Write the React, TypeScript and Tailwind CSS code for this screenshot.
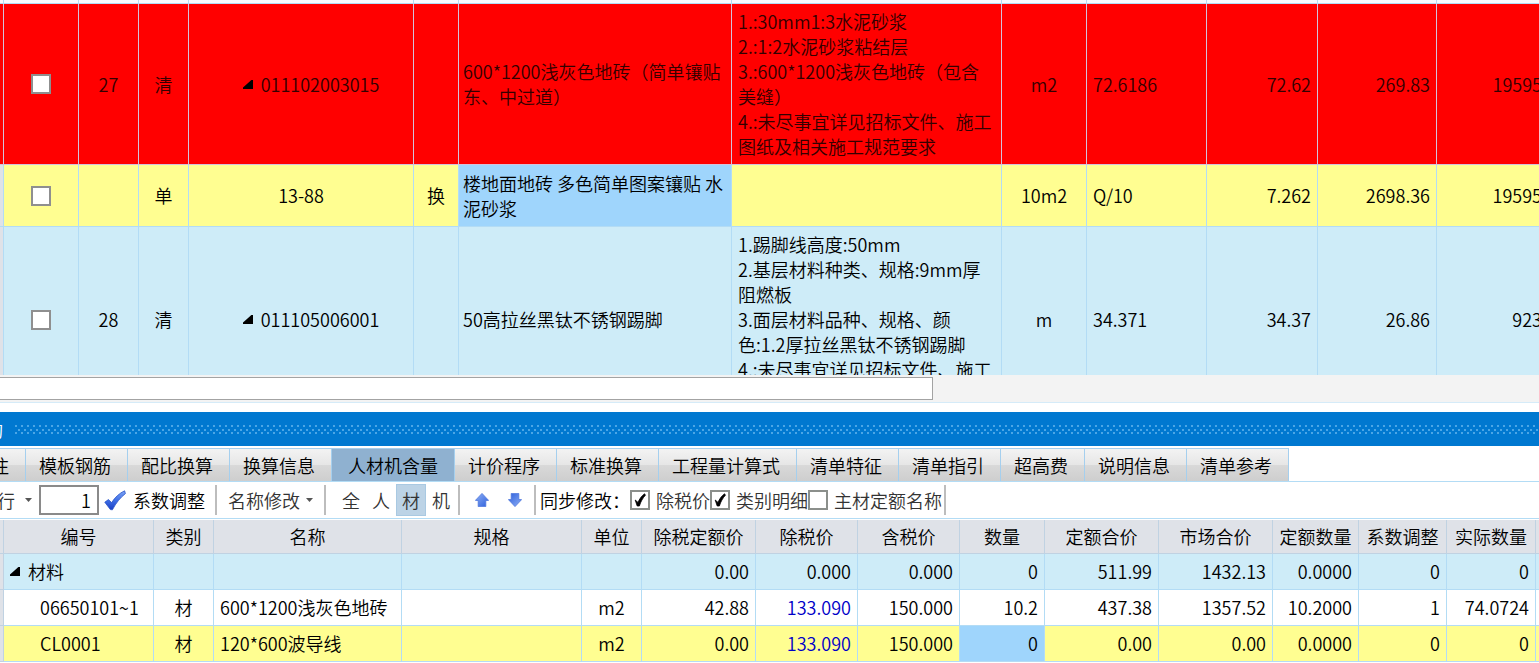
import React from 'react';
import clsx from 'clsx';

type Align = 'left' | 'center' | 'right';

const alignClass: Record<Align, string> = {
  left: 'text-left',
  center: 'text-center',
  right: 'text-right',
};

const itemColumns = ['w-[4px]', 'w-[75px]', 'w-[60px]', 'w-[50px]', 'w-[225px]', 'w-[45px]', 'w-[273px]', 'w-[270px]', 'w-[85px]', 'w-[120px]', 'w-[111px]', 'w-[119px]', ''];

const items = [
  {
    id: '27',
    no: '27',
    type: '清',
    code: '011102003015',
    parent: true,
    mark: '',
    name: '600*1200浅灰色地砖（简单镶贴东、中过道）',
    feature: '1.:30mm1:3水泥砂浆\n2.:1:2水泥砂浆粘结层\n3.:600*1200浅灰色地砖（包含美缝）\n4.:未尽事宜详见招标文件、施工图纸及相关施工规范要求',
    unit: 'm2',
    formula: '72.6186',
    quantity: '72.62',
    price: '269.83',
    total: '19595',
    height: 'h-[161px]',
    tone: 'bg-[#ff0000] text-[#330000]',
    line: 'border-[#d3c3dc]',
    edge: 'bg-[#ff0000]',
  },
  {
    id: '27-1',
    no: '',
    type: '单',
    code: '13-88',
    parent: false,
    mark: '换',
    name: '楼地面地砖 多色简单图案镶贴 水泥砂浆',
    feature: '',
    unit: '10m2',
    formula: 'Q/10',
    quantity: '7.262',
    price: '2698.36',
    total: '19595',
    height: 'h-[62px]',
    tone: 'bg-[#fffe91]',
    line: 'border-[#b3dcf5]',
    edge: 'bg-[#dfe2e8]',
  },
  {
    id: '28',
    no: '28',
    type: '清',
    code: '011105006001',
    parent: true,
    mark: '',
    name: '50高拉丝黑钛不锈钢踢脚',
    feature: '1.踢脚线高度:50mm\n2.基层材料种类、规格:9mm厚阻燃板\n3.面层材料品种、规格、颜色:1.2厚拉丝黑钛不锈钢踢脚\n4.:未尽事宜详见招标文件、施工',
    unit: 'm',
    formula: '34.371',
    quantity: '34.37',
    price: '26.86',
    total: '923',
    height: 'h-[186px]',
    tone: 'bg-[#ceecf8]',
    line: 'border-[#b3dcf5]',
    edge: 'bg-[#dfe2e8]',
  },
];

const tabs = ['注', '模板钢筋', '配比换算', '换算信息', '人材机含量', '计价程序', '标准换算', '工程量计算式', '清单特征', '清单指引', '超高费', '说明信息', '清单参考'];

const materialColumns: { title: string; width: string; align: Align }[] = [
  { title: '编号', width: 'w-[150px]', align: 'left' },
  { title: '类别', width: 'w-[60px]', align: 'center' },
  { title: '名称', width: 'w-[188px]', align: 'left' },
  { title: '规格', width: 'w-[180px]', align: 'left' },
  { title: '单位', width: 'w-[60px]', align: 'center' },
  { title: '除税定额价', width: 'w-[114px]', align: 'right' },
  { title: '除税价', width: 'w-[102px]', align: 'right' },
  { title: '含税价', width: 'w-[102px]', align: 'right' },
  { title: '数量', width: 'w-[85px]', align: 'right' },
  { title: '定额合价', width: 'w-[114px]', align: 'right' },
  { title: '市场合价', width: 'w-[114px]', align: 'right' },
  { title: '定额数量', width: 'w-[86px]', align: 'right' },
  { title: '系数调整', width: 'w-[88px]', align: 'right' },
  { title: '实际数量', width: 'w-[89px]', align: 'right' },
];

const materials = [
  {
    tone: 'bg-[#ceecf8]',
    group: true,
    cells: ['材料', '', '', '', '', '0.00', '0.000', '0.000', '0', '511.99', '1432.13', '0.0000', '0', '0'],
  },
  {
    tone: 'bg-white',
    group: false,
    cells: ['06650101~1', '材', '600*1200浅灰色地砖', '', 'm2', '42.88', '133.090', '150.000', '10.2', '437.38', '1357.52', '10.2000', '1', '74.0724'],
  },
  {
    tone: 'bg-[#fffe91]',
    group: false,
    selected: 8,
    cells: ['CL0001', '材', '120*600波导线', '', 'm2', '0.00', '133.090', '150.000', '0', '0.00', '0.00', '0.0000', '0', '0'],
  },
];

const Expander: React.FC = () => (
  <svg width="10" height="9" viewBox="0 0 10 9" className="shrink-0" aria-hidden="true">
    <path d="M0 9 V7.6 L8.4 0 H10 V9 Z" fill="#000" />
  </svg>
);

const Caret: React.FC = () => (
  <svg width="7" height="4" viewBox="0 0 7 4" className="shrink-0" aria-hidden="true">
    <path d="M0 0 H7 L3.5 4 Z" fill="#555" />
  </svg>
);

const BlueCheck: React.FC = () => (
  <svg width="22" height="21" viewBox="0 0 22 21" className="shrink-0" aria-hidden="true">
    <defs>
      <linearGradient id="checkFill" x1="0" y1="0" x2="0" y2="1">
        <stop offset="0" stopColor="#7fa6f5" />
        <stop offset="0.5" stopColor="#3f6fe6" />
        <stop offset="1" stopColor="#1a3fc4" />
      </linearGradient>
    </defs>
    <path d="M0.8 12.2 L4.4 9.6 L7.6 12.6 C11 7.4 15.4 3.2 20.6 0.8 L21.4 3.6 C16.2 7.6 12 13 8.4 19.8 L6.4 19.6 Z" fill="url(#checkFill)" stroke="#2450c8" strokeWidth="0.8" />
  </svg>
);

const Arrow: React.FC<{ down?: boolean }> = ({ down }) => (
  <svg width="14" height="14" viewBox="0 0 14 14" className={clsx('shrink-0', down && 'rotate-180')} aria-hidden="true">
    <defs>
      <linearGradient id="arrowFill" x1="0" y1="0" x2="1" y2="1">
        <stop offset="0" stopColor="#8fb0f5" />
        <stop offset="1" stopColor="#2c5fdc" />
      </linearGradient>
    </defs>
    <path d="M7 0.4 L13.6 7.4 H10.8 V13.6 H3.2 V7.4 H0.4 Z" fill="url(#arrowFill)" stroke="#4a74dc" strokeWidth="0.8" />
  </svg>
);

const Divider: React.FC = () => <span className="h-[30px] w-[2px] shrink-0 bg-[#bdbdbd]" />;

const CheckOption: React.FC<{ label: string; checked?: boolean }> = ({ label, checked }) => (
  <label className="flex shrink-0 items-center gap-1.5">
    <span className="grid">
      <input
        type="checkbox"
        defaultChecked={checked}
        className="peer col-start-1 row-start-1 size-5 appearance-none border-2 border-[#8b8f8b] bg-white"
      />
      <svg viewBox="0 0 20 20" className="pointer-events-none invisible col-start-1 row-start-1 size-5 peer-checked:visible" aria-hidden="true">
        <path d="M5.2 10 L8 12.4 C9.4 9.2 11.6 5.8 14.6 3.8 L15.4 5.2 C12.8 8 10.6 11.8 9.4 16 H7.2 Z" fill="#000" stroke="#000" strokeWidth="0.8" strokeLinejoin="round" />
      </svg>
    </span>
    {label}
  </label>
);

const ItemGrid: React.FC = () => (
  <div className="min-h-0 flex-1 overflow-hidden">
    <table className="w-full min-w-[1549px] table-fixed border-separate border-spacing-0 leading-[25px]">
      <colgroup>
        {itemColumns.map((width, i) => (
          <col key={i} className={width} />
        ))}
      </colgroup>
      <tbody>
        <tr className="h-[4px]">
          {itemColumns.map((_, i) => (
            <td key={i} className="border-r border-b border-[#b3dcf5] bg-[#f8fbfe]" />
          ))}
        </tr>
        {items.map((item) => {
          const cell = clsx('border-r border-b', item.line, item.tone);
          return (
            <tr key={item.id} className={item.height}>
              <td className={clsx('border-r border-b', item.line, item.edge)} />
              <td className={cell}>
                <div className="flex justify-center">
                  <input type="checkbox" aria-label={item.code} className="size-5 appearance-none border-2 border-[#8f8f8f] bg-white" />
                </div>
              </td>
              <td className={clsx(cell, 'text-center')}>{item.no}</td>
              <td className={clsx(cell, 'text-center')}>{item.type}</td>
              <td className={cell}>
                <div className={clsx('flex items-center justify-center gap-2', item.parent && 'pl-5')}>
                  {item.parent && <Expander />}
                  <span>{item.code}</span>
                </div>
              </td>
              <td className={clsx(cell, 'text-center')}>{item.mark}</td>
              <td className={clsx('border-r border-b px-1', item.line, item.id === '27-1' ? 'bg-[#9fd5fc]' : item.tone)}>{item.name}</td>
              <td className={clsx(cell, 'py-[5px] pr-2 pl-[6px] align-top whitespace-pre-line')}>{item.feature}</td>
              <td className={clsx(cell, 'text-center')}>{item.unit}</td>
              <td className={clsx(cell, 'px-[6px]')}>{item.formula}</td>
              <td className={clsx(cell, 'px-[6px] text-right')}>{item.quantity}</td>
              <td className={clsx(cell, 'px-[6px] text-right')}>{item.price}</td>
              <td className={clsx(cell, 'px-[6px] text-right')}>{item.total}</td>
            </tr>
          );
        })}
      </tbody>
    </table>
  </div>
);

const PanelTitle: React.FC = () => (
  <div className="flex h-[34px] items-center gap-3 bg-[#0078d0] text-white">
    <h2 className="flex w-[3px] shrink-0 justify-end overflow-hidden leading-[34px]">
      <span>构</span>
    </h2>
    <svg className="h-[9px] flex-1" aria-hidden="true">
      <defs>
        <pattern id="grip" width="6" height="9" patternUnits="userSpaceOnUse">
          <rect x="0" y="0" width="2" height="2" fill="#4ba6e6" />
          <rect x="3" y="4" width="2" height="2" fill="#4ba6e6" />
          <rect x="0" y="7" width="2" height="2" fill="#4ba6e6" />
        </pattern>
      </defs>
      <rect width="100%" height="9" fill="url(#grip)" />
    </svg>
  </div>
);

const TabBar: React.FC = () => (
  <div className="mt-[2px] flex h-[34px] border-b border-[#b3dcf5]" role="tablist">
    {tabs.map((tab, i) => (
      <button
        key={tab}
        type="button"
        role="tab"
        aria-selected={tab === '人材机含量'}
        className={clsx(
          'flex shrink-0 items-center border-t border-r border-[#a5cfee]',
          i === 0 ? 'w-[26px] justify-end overflow-hidden pr-4' : tab === '人材机含量' ? 'px-4' : 'pr-4 pl-[13px]',
          tab === '人材机含量' ? 'bg-[#8fb1d0]' : 'bg-[linear-gradient(#f3f3f3,#e6e6e6_50%,#d9d9d9_50%,#cecece)]'
        )}
      >
        {tab}
      </button>
    ))}
  </div>
);

const Toolbar: React.FC = () => (
  <div className="flex h-9 items-center text-[#333]">
    <button type="button" className="flex w-8 shrink-0 items-center justify-end gap-2.5 overflow-hidden">
      <span>行</span>
      <Caret />
    </button>
    <input
      aria-label="系数"
      defaultValue="1"
      className="ml-[7px] h-[30px] w-[60px] shrink-0 border-2 border-[#8a8a8a] bg-white px-[6px] text-right text-black"
    />
    <button type="button" className="mr-2.5 ml-[5px] flex shrink-0 items-center gap-[7px] text-black">
      <BlueCheck />
      系数调整
    </button>
    <Divider />
    <button type="button" className="mx-[11px] flex shrink-0 items-center gap-1.5">
      名称修改
      <Caret />
    </button>
    <Divider />
    <div className="mr-[2px] ml-2.5 flex shrink-0">
      {['全', '人', '材', '机'].map((kind) => (
        <button key={kind} type="button" className={clsx('h-8 w-[30px]', kind === '材' && 'border border-[#a9c9e2] bg-[#bcd3e6]')}>
          {kind}
        </button>
      ))}
    </div>
    <Divider />
    <div className="mr-3 ml-[15px] flex shrink-0 gap-[19px]">
      <button type="button" aria-label="上移">
        <Arrow />
      </button>
      <button type="button" aria-label="下移">
        <Arrow down />
      </button>
    </div>
    <Divider />
    <span className="ml-1 shrink-0 text-black">同步修改：</span>
    <CheckOption label="除税价" checked />
    <CheckOption label="类别明细" checked />
    <CheckOption label="主材定额名称" />
    <span className="w-[2px] shrink-0" />
    <Divider />
  </div>
);

const MaterialGrid: React.FC = () => (
  <div className="overflow-hidden border-t border-[#b3dcf5] pt-px">
    <table className="w-full min-w-[1539px] table-fixed border-separate border-spacing-0 leading-[25px]">
      <colgroup>
        <col className="w-[4px]" />
        {materialColumns.map((column) => (
          <col key={column.title} className={column.width} />
        ))}
        <col />
      </colgroup>
      <thead>
        <tr className="h-[34px] bg-[#dfe2e8]">
          <th className="border-r border-b border-[#c0d2e2]" />
          {materialColumns.map((column) => (
            <th key={column.title} className="border-r border-b border-[#c0d2e2] font-[350] whitespace-nowrap">
              {column.title}
            </th>
          ))}
          <th className="border-b border-[#c0d2e2]" />
        </tr>
      </thead>
      <tbody>
        {materials.map((row) => (
          <tr key={row.cells[0]} className={clsx('h-9', row.tone)}>
            <td className="border-r border-b border-[#c0d2e2] bg-[#dfe2e8]" />
            {row.cells.map((value, i) => (
              <td
                key={materialColumns[i].title}
                className={clsx(
                  'border-r border-b border-[#b3dcf5] px-[6px] whitespace-nowrap',
                  alignClass[materialColumns[i].align],
                  i === row.selected && 'bg-[#9fd5fc]',
                  i === 6 && !row.group && 'text-[#0000c8]'
                )}
              >
                {i === 0 ? (
                  <div className={clsx('flex items-center gap-2', !row.group && 'pl-[30px]')}>
                    {row.group && <Expander />}
                    <span>{value}</span>
                  </div>
                ) : (
                  value
                )}
              </td>
            ))}
            <td className="border-b border-[#b3dcf5]" />
          </tr>
        ))}
      </tbody>
    </table>
  </div>
);

export default function App() {
  return (
    <main
      lang="zh-CN"
      className="flex h-screen flex-col overflow-hidden bg-white font-['Noto_Sans_CJK_SC',sans-serif] text-lg leading-[25px] font-[350] text-black"
    >
      <ItemGrid />
      {/* horizontal scroll bar */}
      <div className="h-7 shrink-0 border-b border-[#d5ebf8] bg-[#f3f3f3] pt-[2px]">
        <div className="h-[23px] w-[933px] border border-l-0 border-[#a3a3a3] bg-white" />
      </div>
      <section className="shrink-0 pt-[9px] pb-px">
        <PanelTitle />
        <TabBar />
        <Toolbar />
        <MaterialGrid />
      </section>
    </main>
  );
}
